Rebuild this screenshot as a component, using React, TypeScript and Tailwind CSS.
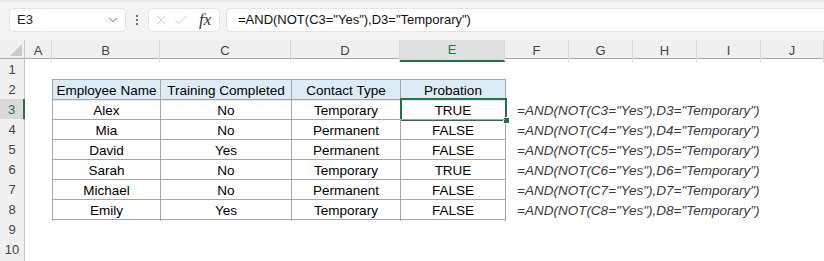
import { ChevronDown, X, Check } from 'lucide-react';

// Grid geometry: row header, A, B, C, D, E, F, G, H, I, J
const COLS = 'grid-cols-[25px_27px_108px_131px_109px_105px_64px_64px_64px_64px_1fr]';
const LETTERS = ['A', 'B', 'C', 'D', 'E', 'F', 'G', 'H', 'I', 'J'];

const TABLE = [
  ['Employee Name', 'Training Completed', 'Contact Type', 'Probation'],
  ['Alex', 'No', 'Temporary', 'TRUE'],
  ['Mia', 'No', 'Permanent', 'FALSE'],
  ['David', 'Yes', 'Permanent', 'FALSE'],
  ['Sarah', 'No', 'Temporary', 'TRUE'],
  ['Michael', 'No', 'Permanent', 'FALSE'],
  ['Emily', 'Yes', 'Temporary', 'FALSE']
];

const CELL_FONT = { fontFamily: '"Liberation Sans", Arial, sans-serif' };

function RowHeader({ n, active }: { n?: number; active?: boolean }) {
  return (
    <div
      className={`flex items-center justify-center pt-[1px] text-[13px] border-b border-[#dcdcdc] ${
        active
          ? 'bg-[#d9d9d9] text-[#217346] border-r-2 border-r-[#217346]'
          : 'bg-[#f0f0f0] text-[#444] border-r border-r-[#c6c6c6]'
      }`}
    >
      {n}
    </div>
  );
}

function TopBar() {
  return (
    <div className="h-[40px] bg-[#f3f3f3] border-t-2 border-[#e6e6e6] flex items-start pt-[6px]">
      <div className="ml-[9px] w-[117px] h-[24px] bg-white rounded-[5px] border border-[#e3e3e3] flex items-center justify-between pl-[7px] pr-[5px] text-[13px] text-[#222]">
        <span>E3</span>
        <ChevronDown size={14} strokeWidth={1.5} className="text-[#555]" />
      </div>
      <div className="w-[22px] h-[24px] flex flex-col items-center justify-center gap-[2px]">
        <span className="w-[2px] h-[2px] bg-[#444] rounded-full" />
        <span className="w-[2px] h-[2px] bg-[#444] rounded-full" />
        <span className="w-[2px] h-[2px] bg-[#444] rounded-full" />
      </div>
      <div className="w-[72px] h-[24px] bg-white rounded-[5px] border border-[#e3e3e3] flex items-center pl-[4px] gap-[4px]">
        <X size={16} strokeWidth={1} className="text-[#b5b5b5]" />
        <Check size={16} strokeWidth={1} className="text-[#b5b5b5]" />
        <span
          className="ml-[6px] text-[17px] italic text-[#333]"
          style={{ fontFamily: '"Liberation Serif", "Times New Roman", serif' }}
        >
          fx
        </span>
      </div>
      <div className="ml-[6px] flex-1 h-[24px] bg-white rounded-l-[5px] border border-r-0 border-[#e3e3e3] flex items-center pl-[11px] text-[13px] text-[#111]">
        =AND(NOT(C3="Yes"),D3="Temporary")
      </div>
    </div>
  );
}

function ColumnHeaders() {
  return (
    <div className={`grid ${COLS} h-[19px] bg-[#f0f0f0] border-b border-[#a8a8a8]`}>
      <div className="relative border-r border-[#c6c6c6]">
        <svg width="25" height="18" className="absolute left-0 top-0">
          <polygon points="10,16 22,16 22,4" fill="#c9c9c9" />
        </svg>
      </div>
      {LETTERS.map((l) => (
        <div
          key={l}
          className={`flex items-center justify-center text-[13px] border-r border-[#d6d6d6] ${
            l === 'E'
              ? 'bg-[#e0e0e0] text-[#217346] border-b-2 border-b-[#217346]'
              : 'text-[#444]'
          }`}
        >
          {l}
        </div>
      ))}
    </div>
  );
}

export default function App() {
  const rowNums = [1, 2, 3, 4, 5, 6, 7, 8, 9, 10, 11];

  return (
    <div className="w-[824px] h-[261px] overflow-hidden bg-white" style={CELL_FONT}>
      <TopBar />
      <ColumnHeaders />
      {rowNums.map((n) => {
        const data = n >= 2 && n <= 8 ? TABLE[n - 2] : null;
        const isHead = n === 2;
        const edge = n === 9;
        return (
          <div key={n} className={`grid ${COLS} h-[20px]`}>
            <RowHeader n={n <= 10 ? n : undefined} active={n === 3} />
            <div />
            {[0, 1, 2, 3].map((c) => (
              <div
                key={c}
                className={`relative flex items-center justify-center pt-[1px] text-[13.5px] text-black ${
                  data ? 'border-t border-l border-[#a6a6a6]' : edge ? 'border-t border-[#a6a6a6]' : ''
                } ${isHead ? 'bg-[#ddebf7]' : ''}`}
              >
                {data ? data[c] : null}
                {n === 3 && c === 3 && (
                  <>
                    <div className="absolute -left-[1px] -top-[2px] w-[107px] h-[23px] border-2 border-[#217346]" />
                    <div className="absolute left-[102px] top-[17px] w-[7px] h-[7px] bg-[#217346] border border-white" />
                  </>
                )}
              </div>
            ))}
            <div
              className={`col-span-5 flex items-center pt-[1px] pl-[11px] text-[13.5px] italic text-[#3a3a3a] whitespace-nowrap ${
                data ? 'border-l border-[#a6a6a6]' : ''
              }`}
            >
              {data && !isHead ? `=AND(NOT(C${n}="Yes"),D${n}="Temporary")` : null}
            </div>
          </div>
        );
      })}
    </div>
  );
}
